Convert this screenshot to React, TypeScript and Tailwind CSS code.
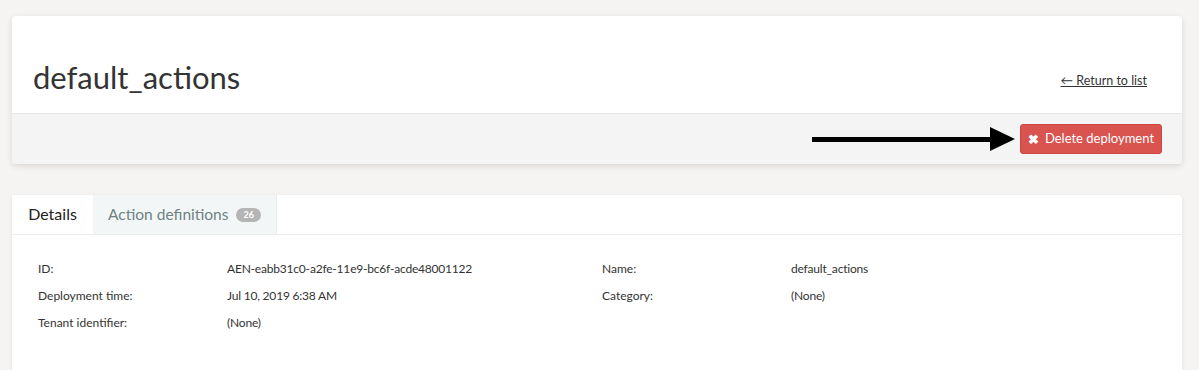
import React from 'react';

const font = { fontFamily: 'Lato, "Open Sans", sans-serif' };

const details: [string, string][][] = [
  [
    ['ID:', 'AEN-eabb31c0-a2fe-11e9-bc6f-acde48001122'],
    ['Deployment time:', 'Jul 10, 2019 6:38 AM'],
    ['Tenant identifier:', '(None)'],
  ],
  [
    ['Name:', 'default_actions'],
    ['Category:', '(None)'],
  ],
];

const App: React.FC = () => {
  return (
    <div className="h-[370px] overflow-hidden bg-[#f5f4f2] px-3 pt-4 text-[#333]" style={font}>
      {/* header card */}
      <div className="w-[1170px] overflow-hidden rounded-[4px] bg-white shadow-[0_2px_6px_rgba(0,0,0,0.12)]">
        <div className="flex h-[98px] items-end justify-between border-b border-[#e6e6e6] pb-[17px] pl-[21px] pr-[35px]">
          <h1 className="text-[31px] leading-[38px] font-normal">default_actions</h1>
          <a href="#" className="mb-[5px] text-[12.5px] text-[#333] underline">← Return to list</a>
        </div>
        <div className="flex h-[50px] items-center justify-end bg-[#f4f4f4] pr-[20px]">
          <div className="mr-[5px] flex items-center">
            <div className="h-[5px] w-[178px] bg-black" />
            <svg width="25" height="24" viewBox="0 0 25 24">
              <polygon points="0,0 25,12 0,24" fill="black" />
            </svg>
          </div>
          <button className="flex h-[30px] w-[142px] items-center justify-center gap-[6px] rounded-[3px] border border-[#d0443f] bg-[#d9534f] text-[13px] text-white">
            <span className="text-[13px] font-bold leading-none">✖</span>
            Delete deployment
          </button>
        </div>
      </div>

      {/* details card */}
      <div className="mt-[31px] h-[180px] w-[1170px] rounded-t-[4px] bg-white shadow-[0_1px_4px_rgba(0,0,0,0.08)]">
        <div className="flex h-[40px] border-b border-[#ececec]">
          <div className="flex w-[81px] items-center justify-center border-b border-white bg-white text-[16px] text-[#222]">
            Details
          </div>
          <div className="flex w-[184px] items-center justify-center gap-[8px] border-r border-[#ececec] bg-[#f3f6f6] text-[15.5px] text-[#6f8283]">
            Action definitions
            <span className="rounded-full bg-[#b5b5b5] px-[7px] py-[1px] text-[9px] font-bold leading-[12px] text-white">26</span>
          </div>
        </div>
        <div className="grid grid-cols-[564px_1fr] pl-[26px] pt-[25px]">
          {details.map((col, i) => (
            <div key={i} className="flex flex-col">
              {col.map(([label, value]) => (
                <div key={label} className="flex h-[27px] items-start text-[12px]">
                  <span className="w-[189px] shrink-0">{label}</span>
                  <span className="tracking-[-0.2px]">{value}</span>
                </div>
              ))}
            </div>
          ))}
        </div>
      </div>
    </div>
  );
};

export default App;
